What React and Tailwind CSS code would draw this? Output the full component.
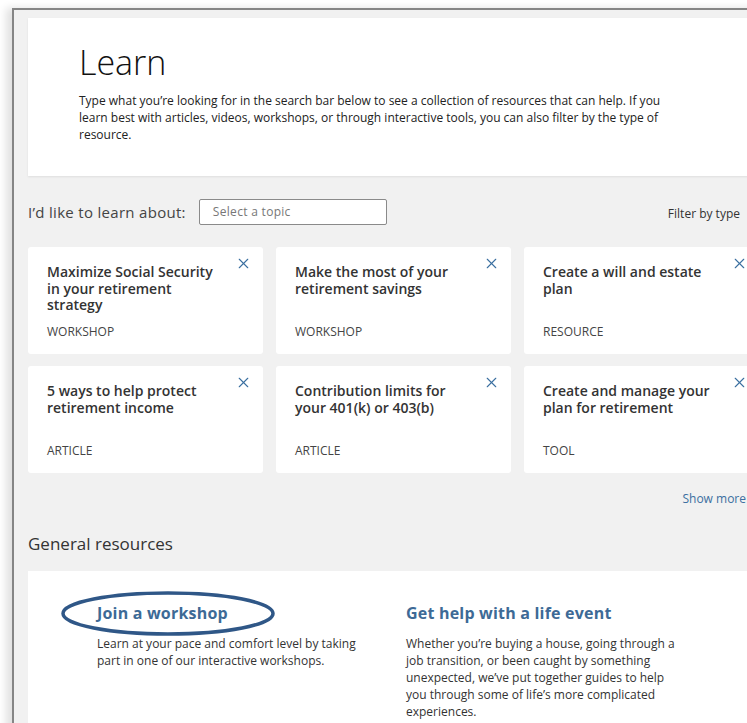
import { X } from 'lucide-react'

const cards = [
  { title: 'Maximize Social Security in your retirement strategy', type: 'Workshop' },
  { title: 'Make the most of your retirement savings', type: 'Workshop' },
  { title: 'Create a will and estate plan', type: 'Resource' },
  { title: '5 ways to help protect retirement income', type: 'Article' },
  { title: 'Contribution limits for your 401(k) or 403(b)', type: 'Article' },
  { title: 'Create and manage your plan for retirement', type: 'Tool' },
]

function TopicCard({ title, type }) {
  return (
    <div className="relative bg-white rounded-[3px] h-[107px] pl-[19px] pr-[40px] pt-[17px] flex flex-col">
      <button className="absolute right-[11px] top-[8px] text-[#3b6fa0]">
        <X size={17} strokeWidth={1.6} />
      </button>
      <h3 className="text-[14px] leading-[16.5px] font-semibold text-[#333]">{title}</h3>
      <p className="mt-auto mb-[15px] text-[12px] leading-[14px] uppercase text-[#444]">{type}</p>
    </div>
  )
}

export default function App() {
  return (
    <div className="w-[747px] h-[723px] overflow-hidden bg-white font-['Open_Sans',sans-serif]">
      <div className="ml-[12px] mt-[8px] w-[800px] h-[740px] border-l-2 border-t-2 border-[#858585] bg-[#f1f1f1] shadow-[-6px_0_8px_rgba(0,0,0,0.12)] pl-[14px] pt-[8px]">
        <section className="w-[760px] h-[158px] bg-white shadow-[0_1px_2px_rgba(0,0,0,0.08)] pl-[51px] pt-[24px]">
          <h1 className="text-[34px] leading-[40px] font-light text-[#111]">Learn</h1>
          <p className="mt-[10px] w-[610px] text-[12px] leading-[17px] text-[#222]">
            Type what you’re looking for in the search bar below to see a collection of resources that can help. If you
            learn best with articles, videos, workshops, or through interactive tools, you can also filter by the type of
            resource.
          </p>
        </section>

        <div className="w-[760px] mt-[23px] flex items-center">
          <span className="text-[15px] text-[#444] tracking-[0.3px]">I’d like to learn about:</span>
          <div className="ml-[13px] w-[188px] h-[26px] border border-[#8a8a8a] rounded-[2px] bg-white flex items-center pl-[13px]">
            <span className="text-[12px] text-[#777] tracking-[0.3px]">Select a topic</span>
          </div>
          <span className="ml-auto mr-[48px] mt-[4px] text-[12px] text-[#333]">Filter by type</span>
        </div>

        <div className="w-[731px] mt-[22px] grid grid-cols-3 gap-x-[13px] gap-y-[12px]">
          {cards.map((c) => (
            <TopicCard key={c.title} {...c} />
          ))}
        </div>

        <div className="w-[731px] mt-[17px] flex justify-end pr-[13px]">
          <a className="text-[12px] text-[#3b6fa0]">Show more</a>
        </div>

        <h2 className="mt-[24px] text-[17px] leading-[24px] text-[#333]">General resources</h2>

        <section className="mt-[15px] w-[760px] h-[200px] bg-white pl-[69px] pt-[32px] flex">
          <div className="w-[309px]">
            <div className="relative">
              <svg className="absolute left-[-36px] top-[-12px]" width="214" height="45" viewBox="0 0 214 45">
                <ellipse cx="107" cy="22.5" rx="105" ry="20.5" fill="none" stroke="#2f5787" strokeWidth="3.5" />
              </svg>
              <h3 className="relative text-[16px] leading-[21px] font-bold text-[#3d6a96] tracking-[0.2px]">Join a workshop</h3>
            </div>
            <p className="mt-[11px] w-[272px] text-[12px] leading-[17px] text-[#333]">
              Learn at your pace and comfort level by taking part in one of our interactive workshops.
            </p>
          </div>
          <div>
            <h3 className="text-[16px] leading-[21px] font-bold text-[#3d6a96] tracking-[0.2px]">Get help with a life event</h3>
            <p className="mt-[11px] w-[276px] text-[12px] leading-[17px] text-[#333]">
              Whether you’re buying a house, going through a job transition, or been caught by something unexpected,
              we’ve put together guides to help you through some of life’s more complicated experiences.
            </p>
          </div>
        </section>
      </div>
    </div>
  )
}
